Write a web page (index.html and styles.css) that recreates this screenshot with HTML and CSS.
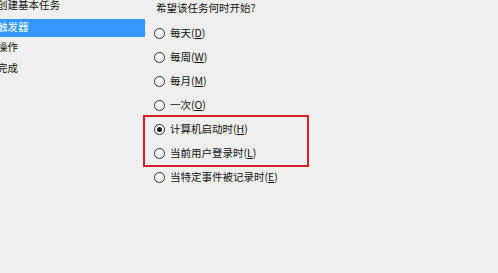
FILE: index.html
```html
<!DOCTYPE html>
<html lang="zh-CN">
<head>
<meta charset="utf-8">
<title>创建基本任务向导</title>
<link rel="stylesheet" href="styles.css">
</head>
<body>
<div class="wizard">
  <ul class="nav">
    <li class="nav-item">创建基本任务</li>
    <li class="nav-item selected">触发器</li>
    <li class="nav-item">操作</li>
    <li class="nav-item">完成</li>
  </ul>
  <div class="main">
    <div class="heading">希望该任务何时开始?</div>
    <div class="options">
      <div class="opt"><span class="radio"></span><span class="label">每天(<u>D</u>)</span></div>
      <div class="opt"><span class="radio"></span><span class="label">每周(<u>W</u>)</span></div>
      <div class="opt"><span class="radio"></span><span class="label">每月(<u>M</u>)</span></div>
      <div class="opt"><span class="radio"></span><span class="label">一次(<u>O</u>)</span></div>
      <div class="highlight">
        <div class="opt"><span class="radio checked"></span><span class="label">计算机启动时(<u>H</u>)</span></div>
        <div class="opt"><span class="radio"></span><span class="label">当前用户登录时(<u>L</u>)</span></div>
      </div>
      <div class="opt"><span class="radio"></span><span class="label">当特定事件被记录时(<u>E</u>)</span></div>
    </div>
  </div>
</div>
</body>
</html>
```
FILE: styles.css
```css
html, body {
  margin: 0;
  padding: 0;
  background: #f0f0f0;
}
body {
  width: 498px;
  height: 273px;
  overflow: hidden;
  font-family: "Noto Sans CJK SC", "Noto Sans", sans-serif;
  font-size: 10.5px;
  color: #111111;
}
.wizard {
  display: flex;
  align-items: flex-start;
}
.nav {
  list-style: none;
  margin: -4px 0 0 0;
  padding: 0;
  flex: 0 0 143px;
  display: flex;
  flex-direction: column;
  gap: 3px;
}
.nav-item {
  height: 18px;
  line-height: 18px;
  text-indent: -3px;
  white-space: nowrap;
}
.nav-item.selected {
  width: 145px;
  background: #3399ff;
  color: #ffffff;
  margin-top: 2px;
  margin-bottom: -2px;
  line-height: 15px;
}
.main {
  flex: 1;
  display: flex;
  flex-direction: column;
}
.heading {
  height: 16px;
  line-height: 16px;
  padding-left: 11px;
  margin-bottom: 5px;
}
.options {
  display: flex;
  flex-direction: column;
}
.highlight {
  width: 162px;
  outline: 2px solid #d4202c;
}
.opt {
  height: 24px;
  display: flex;
  align-items: center;
  padding-left: 9px;
}
.radio {
  box-sizing: border-box;
  width: 11px;
  height: 11px;
  border: 1px solid #2b2b2b;
  border-radius: 50%;
  background: #ffffff;
  margin-right: 5px;
  display: flex;
  align-items: center;
  justify-content: center;
  flex: 0 0 auto;
}
.radio.checked::after {
  content: "";
  width: 5px;
  height: 5px;
  border-radius: 50%;
  background: #1a1a1a;
}
.label {
  white-space: nowrap;
  line-height: 14px;
}
.label u {
  text-decoration-thickness: 1px;
  text-underline-offset: 1px;
}
```
